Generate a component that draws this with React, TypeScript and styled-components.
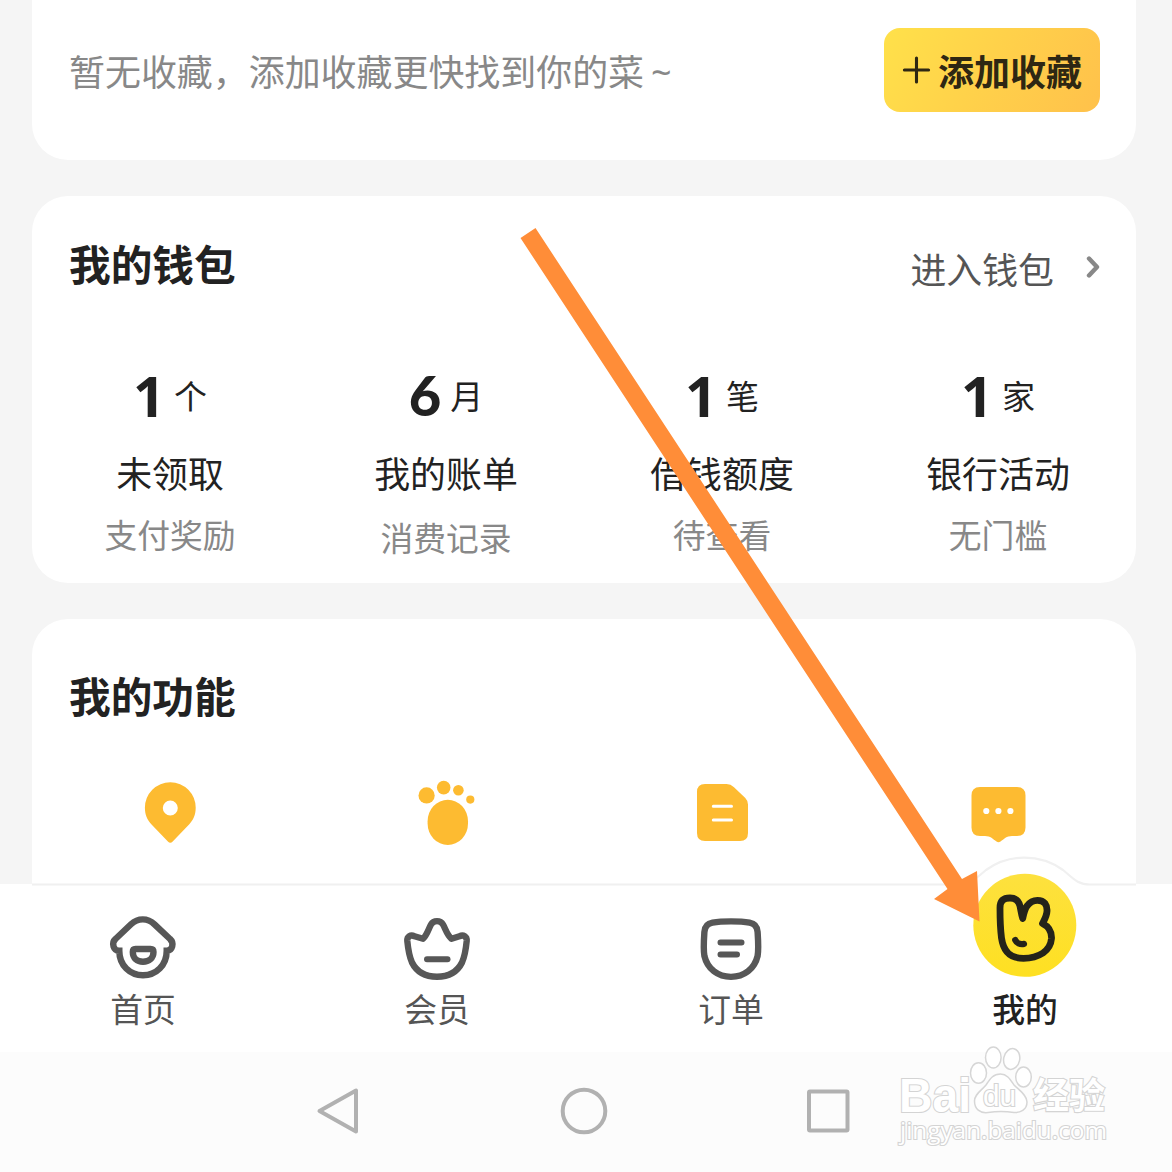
import React from "react";
import styled, { createGlobalStyle } from "styled-components";

const GlobalStyle = createGlobalStyle`
  * { box-sizing: border-box; }
  body { margin: 0; background: #f5f5f5; }
`;

const Screen = styled.div`
  position: relative;
  display: flex;
  flex-direction: column;
  width: 1172px;
  height: 1172px;
  overflow: hidden;
  background: #f5f5f5;
  color: #222;
  font-family: "Noto Sans CJK SC", sans-serif;
`;

const Content = styled.main`
  display: flex;
  flex-direction: column;
  gap: 36px;
  height: 884px;
  padding: 0 36px 0 32px;
`;

const Card = styled.section<{ $height: number; $radius: string }>`
  display: flex;
  flex-direction: column;
  flex: none;
  height: ${(p) => p.$height}px;
  border-radius: ${(p) => p.$radius};
  background: #fff;
`;

const FavoriteRow = styled.div`
  display: flex;
  align-items: flex-start;
  justify-content: space-between;
  padding: 28px 36px 0 37px;
`;

const Hint = styled.span`
  margin-top: 15px;
  font-size: 35.95px;
  line-height: 54px;
  color: #888;
  white-space: nowrap;
`;

const Tilde = styled.span`
  margin-left: 7px;
  font-family: "Noto Sans", sans-serif;
`;

const AddButton = styled.button`
  display: flex;
  align-items: center;
  gap: 7px;
  width: 216px;
  height: 84px;
  padding: 0 18px;
  border: 0;
  border-radius: 16px;
  background: linear-gradient(120deg, #ffe14a 0%, #ffd24a 45%, #ffc14b 100%);
  color: #2e2713;
  font: 700 36px/54px "Noto Sans CJK SC", sans-serif;
  white-space: nowrap;
`;

const CardHeader = styled.header<{ $top: number }>`
  display: flex;
  justify-content: space-between;
  padding: ${(p) => p.$top}px 36px 0 37px;
`;

const Title = styled.h2`
  margin: 0;
  font-size: 41.7px;
  font-weight: 700;
  line-height: 60px;
`;

const WalletLink = styled.a`
  display: flex;
  align-items: center;
  gap: 31px;
  height: 54px;
  margin-top: 8px;
  font-size: 35.9px;
  line-height: 54px;
  color: #555;
  svg { margin-top: -3px; }
`;

const FourColumns = styled.div<{ $top: number }>`
  display: grid;
  grid-template-columns: repeat(4, 1fr);
  padding-top: ${(p) => p.$top}px;
`;

const Stat = styled.div`
  display: flex;
  flex-direction: column;
  align-items: center;
`;

const Amount = styled.div`
  display: flex;
  align-items: center;
  justify-content: center;
  height: 60px;
`;

const Digit = styled.span<{ $face: string; $weight: number }>`
  font-family: ${(p) => p.$face}, sans-serif;
  font-size: 56px;
  font-weight: ${(p) => p.$weight};
  line-height: 60px;
`;

const Unit = styled.span`
  margin-left: 9px;
  font-size: 33px;
  line-height: 50px;
`;

const StatLabel = styled.div`
  margin-top: 20px;
  font-size: 35.9px;
  line-height: 54px;
`;

const StatNote = styled.div<{ $shift: number }>`
  margin-top: ${(p) => 11 + p.$shift}px;
  font-size: 32.8px;
  line-height: 48px;
  color: #888;
`;

const FeatureCell = styled.div`
  display: flex;
  justify-content: center;
`;

const TabBar = styled.nav`
  position: relative;
  display: grid;
  grid-template-columns: repeat(4, 294px);
  justify-content: end;
  flex: none;
  height: 168px;
  background: #fff;
`;

const TabEdge = styled.svg`
  position: absolute;
  left: 0;
  top: -30px;
`;

const Tab = styled.div<{ $active?: boolean }>`
  position: relative;
  display: flex;
  flex-direction: column;
  align-items: center;
  padding-top: ${(p) => (p.$active ? 0 : 28)}px;
  font-size: 32.8px;
  font-weight: ${(p) => (p.$active ? 500 : 400)};
  line-height: 48px;
  color: ${(p) => (p.$active ? "#222" : "#555")};
  svg { display: block; flex: none; margin-top: ${(p) => (p.$active ? -12 : 0)}px; }
`;

const TabLabel = styled.span<{ $active?: boolean }>`
  margin-top: ${(p) => (p.$active ? 4 : 0)}px;
`;

const SystemBar = styled.footer`
  display: flex;
  align-items: flex-start;
  flex: none;
  gap: 196px;
  height: 120px;
  padding: 34px 0 0 314px;
  background: #fcfcfc;
  svg { overflow: visible; }
`;

const Arrow = styled.svg`
  position: absolute;
  left: 0;
  top: 0;
  pointer-events: none;
`;

const Watermark = styled.div`
  position: absolute;
  left: 896px;
  top: 1044px;
  width: 216px;
  height: 106px;
  svg { display: block; overflow: visible; }
  text {
    fill: #fff;
    stroke: #d4d4d4;
    stroke-width: 2.2px;
    paint-order: stroke;
  }
`;

const AMBER = "#fdbb31";

const PlusIcon = () => (
  <svg width="30" height="30" viewBox="0 0 30 30" fill="none" stroke="#2e2713" strokeWidth="3.2" strokeLinecap="round">
    <path d="M15 2.5v25M2.500 15h25" />
  </svg>
);

const ChevronIcon = () => (
  <svg width="15" height="24" viewBox="0 0 15 24" fill="none" stroke="#888" strokeWidth="4.4" strokeLinecap="round" strokeLinejoin="round">
    <path d="M4 3.500L12 12L4 20.500" />
  </svg>
);

const PinIcon = () => (
  <svg width="72" height="72" viewBox="134 777 72 72">
    <path
      fill={AMBER}
      fillRule="evenodd"
      d="M170.3 782.2a25.4 25.4 0 0 1 25.4 25.6c0 7-2.4 12.2-6.4 16.4l-16.6 17.3a3.4 3.4 0 0 1-4.8 0l-16.6-17.3c-4-4.2-6.400-9.400-6.400-16.400a25.4 25.4 0 0 1 25.4-25.6zM170.3 800.5a7.5 7.5 0 1 0 0 15a7.5 7.5 0 1 0 0-15z"
    />
  </svg>
);

const FootIcon = () => (
  <svg width="72" height="72" viewBox="410 777 72 72" fill={AMBER}>
    <rect x="427.6" y="799.8" width="40.4" height="45.2" rx="20.2" ry="21.5" />
    <circle cx="426.6" cy="795.4" r="8.1" />
    <circle cx="443.7" cy="787.6" r="6.8" />
    <circle cx="458.4" cy="790.2" r="5.3" />
    <circle cx="470.3" cy="799.6" r="4.1" />
  </svg>
);

const NoteIcon = () => (
  <svg width="72" height="72" viewBox="686 777 72 72">
    <path
      fill={AMBER}
      d="M705 784h21.500q4.200 0 7.500 3.200l11.300 10.800q2.700 2.800 2.700 6.500v28.500q0 8-8 8H705q-8 0-8-8V792q0-8 8-8z"
    />
    <path d="M713.3 806.300h18.200M713.3 820.100h18.200" stroke="#fff" strokeWidth="3" strokeLinecap="round" />
  </svg>
);

const ChatIcon = () => (
  <svg width="72" height="72" viewBox="962 777 72 72">
    <path
      fill={AMBER}
      d="M980 787h37q8.500 0 8.500 8.500v32q0 8.500-8.500 8.500h-5c-5.500 0-8 3-11.500 5.600q-2 1.500-4 0c-3.500-2.600-6-5.600-11.500-5.600h-5q-8.500 0-8.500-8.500v-32q0-8.500 8.500-8.500z"
    />
    <g fill="#fff">
      <circle cx="986.3" cy="811" r="3.100" />
      <circle cx="998.400" cy="811" r="3.100" />
      <circle cx="1010.400" cy="811" r="3.100" />
    </g>
  </svg>
);

const TabIcon = ({ x, children }: { x: number; children: React.ReactNode }) => (
  <svg
    width="72"
    height="72"
    viewBox={`${x} 912 72 72`}
    fill="none"
    stroke="#575757"
    strokeWidth="6.4"
    strokeLinecap="round"
    strokeLinejoin="round"
  >
    {children}
  </svg>
);

const HomeIcon = () => (
  <TabIcon x={107}>
    <path
      strokeLinejoin="miter"
      d="M119.300 950.800C113.500 950.800 111 943 115.500 939L131 924.300C138 917.700 147.500 917.700 154.500 924.300L170 939C174.500 943 172.500 950.800 166.700 950.800C166.700 965.500 156 975.300 143 975.300C130 975.300 119.300 965.500 119.300 950.800Z"
    />
    <path d="M135.500 949H150.500Q153.500 949 153.500 952C153.500 958 149 961.700 143 961.700C137 961.700 132.800 958 132.800 952Q132.800 949 135.500 949Z" strokeWidth="6.400" />
  </TabIcon>
);

const CrownIcon = () => (
  <TabIcon x={401}>
    <path d="M407.300 941C407 936.500 410.500 934.500 414.500 936.200L423 938.800C427 935 428.500 929 431 924.500C433.500 920 440.500 920 443 924.500C445.500 929 447 935 451.500 938.800L459.500 936.200C463.500 934.500 467 936.500 466.700 941C466 948 464.500 957 462 962.500C457 972.500 448 976.700 437 976.700C426 976.700 417 972.500 412 962.500C409.500 957 408 948 407.300 941Z" />
    <path d="M427 959.300H447.500" strokeWidth="6" />
  </TabIcon>
);

const OrderIcon = () => (
  <TabIcon x={695}>
    <path d="M712.500 922.600C722 920.900 740 920.900 749.500 922.600C755.500 923.600 757.300 927 757.600 932C758.200 941 758.800 949 757.600 956C754.500 969 744 976.900 731 976.900C718 976.900 707.500 969 704.400 956C703.200 949 703.800 941 704.400 932C704.700 927 706.500 923.600 712.500 922.600Z" />
    <path d="M720.500 942.500H741.500M720.500 954.500H737" strokeWidth="6" />
  </TabIcon>
);

const MineIcon = () => (
  <svg width="108" height="108" viewBox="971 872 108 108" fill="none">
    <defs>
      <linearGradient id="mine" x1="0" y1="0" x2="0" y2="1">
        <stop offset="0" stopColor="#fde13e" />
        <stop offset="1" stopColor="#fee022" />
      </linearGradient>
    </defs>
    <circle cx="1024.800" cy="925.300" r="51.500" fill="url(#mine)" />
    <g stroke="#24231a" strokeLinecap="round" strokeLinejoin="round">
      <path
        strokeWidth="6.800"
        d="M1000 908C1000 901 1003.500 898 1010 898C1016.500 898 1019 901.500 1020 906C1021 910.500 1021.500 915 1022.700 918.500C1023.700 914 1024.500 909.500 1027 906C1029.500 902.500 1033 900.300 1037.500 900.300C1044.500 900.300 1047.300 905 1047 911C1046.800 916 1044.500 919.500 1042.500 923.500C1048.500 926.500 1051.800 932 1051.500 938.500C1051 944.500 1048 949.500 1043 953C1038 956.300 1031 958.300 1023.500 958.300C1010.500 958.300 1003.500 952 1001.500 938C1000.200 928 1000 918 1000 908Z"
      />
      <path strokeWidth="6.200" d="M1015.200 940C1016.500 943 1020 944.700 1024 943.900" />
    </g>
  </svg>
);

const SystemIcon = ({ children }: { children: React.ReactNode }) => (
  <svg width="48" height="50" viewBox="0 0 48 50" fill="none" stroke="#b1b1b1" strokeWidth="4" strokeLinejoin="round">
    {children}
  </svg>
);

const OPEN_SANS = { face: '"Open Sans"', weight: 700 };
const LATO = { face: "Lato", weight: 900 };

const stats = [
  { value: "1", digit: OPEN_SANS, unit: "个", label: "未领取", note: "支付奖励", shift: 0 },
  { value: "6", digit: LATO, unit: "月", label: "我的账单", note: "消费记录", shift: 3 },
  { value: "1", digit: OPEN_SANS, unit: "笔", label: "借钱额度", note: "待查看", shift: 0 },
  { value: "1", digit: OPEN_SANS, unit: "家", label: "银行活动", note: "无门槛", shift: 0 },
];

const features = [PinIcon, FootIcon, NoteIcon, ChatIcon];

const tabs = [
  { label: "首页", Icon: HomeIcon },
  { label: "会员", Icon: CrownIcon },
  { label: "订单", Icon: OrderIcon },
  { label: "我的", Icon: MineIcon, active: true },
];

export default function App() {
  return (
    <Screen>
      <GlobalStyle />
      <Content>
        <Card $height={160} $radius="0 0 36px 36px">
          <FavoriteRow>
            <Hint>
              暂无收藏，添加收藏更快找到你的菜<Tilde>~</Tilde>
            </Hint>
            <AddButton>
              <PlusIcon />
              添加收藏
            </AddButton>
          </FavoriteRow>
        </Card>

        <Card $height={387} $radius="36px">
          <CardHeader $top={37}>
            <Title>我的钱包</Title>
            <WalletLink>
              进入钱包
              <ChevronIcon />
            </WalletLink>
          </CardHeader>
          <FourColumns $top={70}>
            {stats.map((s) => (
              <Stat key={s.label}>
                <Amount>
                  <Digit $face={s.digit.face} $weight={s.digit.weight}>{s.value}</Digit>
                  <Unit>{s.unit}</Unit>
                </Amount>
                <StatLabel>{s.label}</StatLabel>
                <StatNote $shift={s.shift}>{s.note}</StatNote>
              </Stat>
            ))}
          </FourColumns>
        </Card>

        <Card $height={265} $radius="36px 36px 0 0">
          <CardHeader $top={46}>
            <Title>我的功能</Title>
          </CardHeader>
          <FourColumns $top={52}>
            {features.map((Icon, i) => (
              <FeatureCell key={i}>
                <Icon />
              </FeatureCell>
            ))}
          </FourColumns>
        </Card>
      </Content>

      <TabBar>
        <TabEdge width="1172" height="34" viewBox="0 854 1172 34">
          <path d="M955 890V884.500C972 884.500 976 878 986 870C1009 853.500 1040 853.500 1063 870C1073 878 1077 884.500 1094 884.500V890Z" fill="#fff" />
          <path
            d="M32 884.500H955C972 884.500 976 878 986 870C1009 853.500 1040 853.500 1063 870C1073 878 1077 884.500 1090 884.500H1136"
            fill="none"
            stroke="#f0f0f0"
            strokeWidth="2.200"
          />
        </TabEdge>
        {tabs.map(({ label, Icon, active }) => (
          <Tab key={label} $active={active}>
            <Icon />
            <TabLabel $active={active}>{label}</TabLabel>
          </Tab>
        ))}
      </TabBar>

      <SystemBar>
        <SystemIcon>
          <path d="M42 4.500V45.500L5.500 25Z" />
        </SystemIcon>
        <SystemIcon>
          <circle cx="26" cy="25" r="21.300" />
        </SystemIcon>
        <SystemIcon>
          <rect x="7" y="5.500" width="38.500" height="39" rx="1" />
        </SystemIcon>
      </SystemBar>

      <Watermark>
        <svg width="216" height="106" viewBox="896 1044 216 106">
          <g fill="#fff" stroke="#d6d6d6" strokeWidth="1.500">
            <ellipse cx="978.500" cy="1073" rx="8" ry="10.300" />
            <ellipse cx="993.300" cy="1057.500" rx="7.800" ry="10.500" />
            <ellipse cx="1011.700" cy="1059" rx="8" ry="10.500" transform="rotate(12 1011.700 1059)" />
            <ellipse cx="1023.500" cy="1077" rx="7.800" ry="10" />
            <path d="M1000.500 1074C1007 1074 1010 1079 1014 1085C1019 1090 1027 1095 1027 1102C1027 1110 1020 1113 1014 1112.500C1007 1111.500 995 1111.500 988 1112.500C980 1113.500 974.500 1109 974.500 1101C974.500 1094 981 1091 986 1085C990 1079 993 1074 1000.500 1074Z" />
          </g>
          <text x="899" y="1111.500" fontFamily="Liberation Sans, sans-serif" fontWeight="700" fontSize="48" textLength="72" lengthAdjust="spacingAndGlyphs">Bai</text>
          <text x="983" y="1106" fontFamily="Liberation Sans, sans-serif" fontSize="29" textLength="33" lengthAdjust="spacingAndGlyphs">du</text>
          <text x="1033" y="1108.500" fontFamily="Noto Sans CJK SC, sans-serif" fontWeight="700" fontSize="36.500" textLength="72" lengthAdjust="spacingAndGlyphs">经验</text>
          <text x="900" y="1139" fontFamily="Open Sans, sans-serif" fontSize="24" textLength="207" lengthAdjust="spacingAndGlyphs">jingyan.baidu.com</text>
        </svg>
      </Watermark>

      <Arrow width="1172" height="1172" viewBox="0 0 1172 1172">
        <path d="M520.500 238L535.500 228L962 879L977 871L979.500 921.500L934 899L947.500 889Z" fill="#ff8d38" />
      </Arrow>
    </Screen>
  );
}
